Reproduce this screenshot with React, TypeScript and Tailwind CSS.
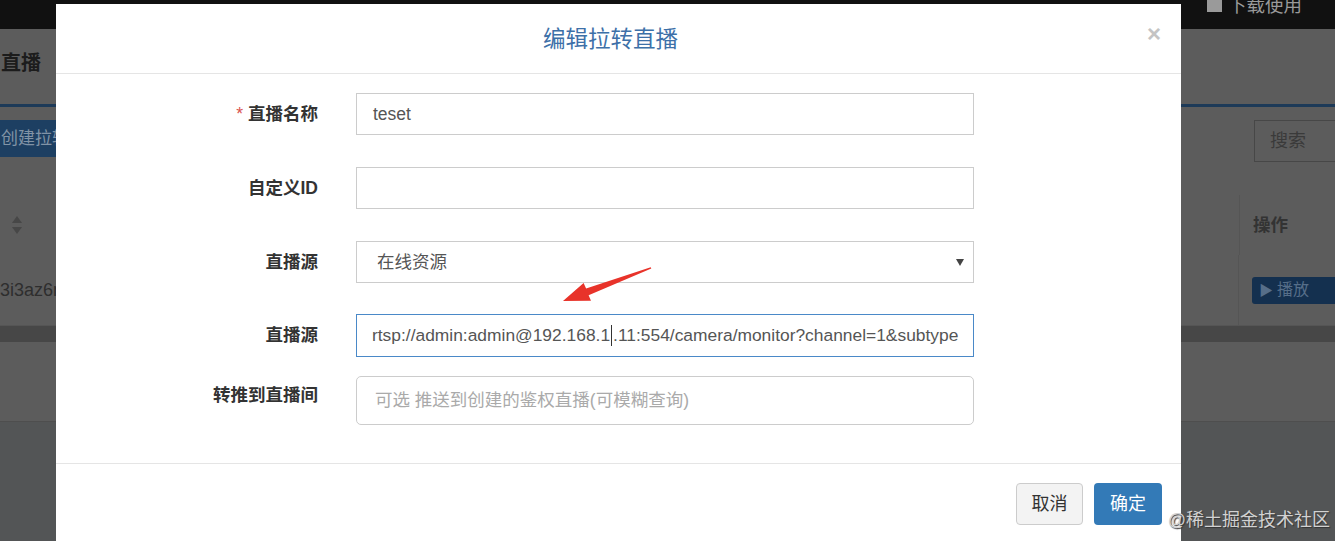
const font = { fontFamily: '"Liberation Sans", "Noto Sans CJK SC", sans-serif' };

function SortIcon() {
  return (
    <svg width="12" height="20" viewBox="0 0 12 20" className="text-[#474747]">
      <path d="M6 1 L11 8 L1 8 Z" fill="currentColor" />
      <path d="M6 19 L11 12 L1 12 Z" fill="currentColor" />
    </svg>
  );
}

function Arrow() {
  return (
    <svg
      width="100"
      height="45"
      viewBox="0 0 100 45"
      className="absolute left-[555px] top-[262px]"
    >
      <polygon
        points="8,39 36,38.8 33.6,33.2 96.3,6.6 95.7,5.2 31.1,26.4 28.6,21"
        fill="#e8332a"
      />
    </svg>
  );
}

function FormRow({
  label,
  required,
  children,
  className,
}: {
  label: string;
  required?: boolean;
  children: React.ReactNode;
  className?: string;
}) {
  return (
    <div className={`flex items-center ${className ?? ''}`}>
      <div className="w-[262px] text-right text-[17.5px] font-bold text-[#333]">
        {required && <span className="mr-[5px] font-normal text-[#d9534f]">*</span>}
        {label}
      </div>
      <div className="ml-[38px] w-[618px]">{children}</div>
    </div>
  );
}

export default function App() {
  return (
    <div
      className="relative h-[541px] w-[1335px] overflow-hidden bg-[#5c5c5c]"
      style={font}
    >
      {/* dimmed page behind the dialog */}
      <div className="flex h-[29px] justify-end bg-[#111] pr-[33px]">
        <div className="-mt-[17px] flex items-center gap-[6px] text-[18.5px] text-[#9a9a9a]">
          <span className="h-[12px] w-[15px] bg-[#9a9a9a]" />
          下载使用
        </div>
      </div>
      <div className="h-[75px] pl-[1px] pt-[19px] text-[20px] font-bold text-[#1c1c1c]">
        直播
      </div>
      <div className="h-[3px] bg-[#1d3a58]" />
      <div className="flex h-[88px] items-start justify-between pt-[13px]">
        <div className="flex h-[37px] items-center bg-[#1d3f62] pl-[1px] pr-[20px] text-[17px] text-[#8193a6]">
          创建拉转
        </div>
        <div className="-mr-[10px] flex h-[42px] w-[91px] items-center border border-[#474747] pl-[15px] text-[18px] text-[#3a3a3a]">
          搜索
        </div>
      </div>
      <div className="flex h-[60px] items-center justify-between">
        <div className="flex items-center pl-[11px]">
          <SortIcon />
        </div>
        <div className="flex h-full items-center border-l border-[#555] pl-[13px] pr-[47px] text-[17.5px] font-bold text-[#333]">
          操作
        </div>
      </div>
      <div className="flex h-[70px] items-center justify-between">
        <div className="text-[18px] text-[#2e2e2e]">3i3az6m</div>
        <div className="flex h-full items-center border-l border-[#555] pl-[13px]">
          <div className="flex h-[27px] w-[83px] items-center gap-[4px] rounded-l-[3px] bg-[#14304f] pl-[7px] text-[16px] text-[#566e89]">
            <span className="text-[14px]">▶</span>播放
          </div>
        </div>
      </div>
      <div className="h-[17px] border-t border-[#555] bg-[#474747]" />
      <div className="h-[79px]" />
      <div className="h-[120px] border-t border-[#4e4e4e] bg-[#535556]" />

      {/* dialog */}
      <div className="absolute left-[56px] top-[4px] h-[560px] w-[1125px] bg-white">
        <div className="flex h-[70px] items-center justify-between border-b border-[#e5e5e5] pl-[18px] pr-[20px]">
          <div className="w-[24px]" />
          <div className="mr-[24px] pt-[2px] text-[22.5px] text-[#3d70a8]">编辑拉转直播</div>
          <div className="-mt-[10px] text-[24px] font-bold leading-none text-[#c4c4c4]">×</div>
        </div>
        <div className="pb-[38px] pt-[19px]">
          <FormRow label="直播名称" required>
            <div className="flex h-[42px] items-center border border-[#ccc] pl-[16px] text-[17.5px] text-[#555]">
              teset
            </div>
          </FormRow>
          <FormRow label="自定义ID" className="mt-[32px]">
            <div className="h-[42px] border border-[#ccc]" />
          </FormRow>
          <FormRow label="直播源" className="mt-[32px]">
            <div className="flex h-[42px] items-center justify-between border border-[#ccc] pl-[20px] pr-[9px] text-[17.5px] text-[#555]">
              在线资源
              <svg width="8" height="7" viewBox="0 0 8 7">
                <path d="M0 0 L8 0 L4 7 Z" fill="#444" />
              </svg>
            </div>
          </FormRow>
          <FormRow label="直播源" className="mt-[31px]">
            <div className="flex h-[43px] items-center whitespace-nowrap border border-[#4a89c8] pl-[15px] text-[17.4px] text-[#555]">
              rtsp://admin:admin@192.168.1
              <span className="mx-[1px] inline-block h-[21px] w-px bg-[#333]" />
              .11:554/camera/monitor?channel=1&amp;subtype
            </div>
          </FormRow>
          <FormRow label="转推到直播间" className="mt-[19px] -translate-y-[5px]">
            <div className="flex h-[49px] translate-y-[5px] items-center rounded-[5px] border border-[#ccc] pl-[18px] text-[17.5px] text-[#aaa]">
              可选 推送到创建的鉴权直播(可模糊查询)
            </div>
          </FormRow>
        </div>
        <div className="flex justify-end gap-[11px] border-t border-[#e5e5e5] pr-[19px] pt-[19px]">
          <div className="flex h-[42px] w-[67px] items-center justify-center rounded-[4px] border border-[#ccc] bg-[#f3f3f3] text-[18px] text-[#333]">
            取消
          </div>
          <div className="flex h-[42px] w-[68px] items-center justify-center rounded-[4px] bg-[#337ab7] text-[18px] text-white">
            确定
          </div>
        </div>
      </div>

      <Arrow />

      <div
        className="absolute bottom-[7px] right-[5px] text-[18px] text-[#d2d2d2]"
        style={{ textShadow: '1px 1px 1px #333' }}
      >
        @稀土掘金技术社区
      </div>
    </div>
  );
}
